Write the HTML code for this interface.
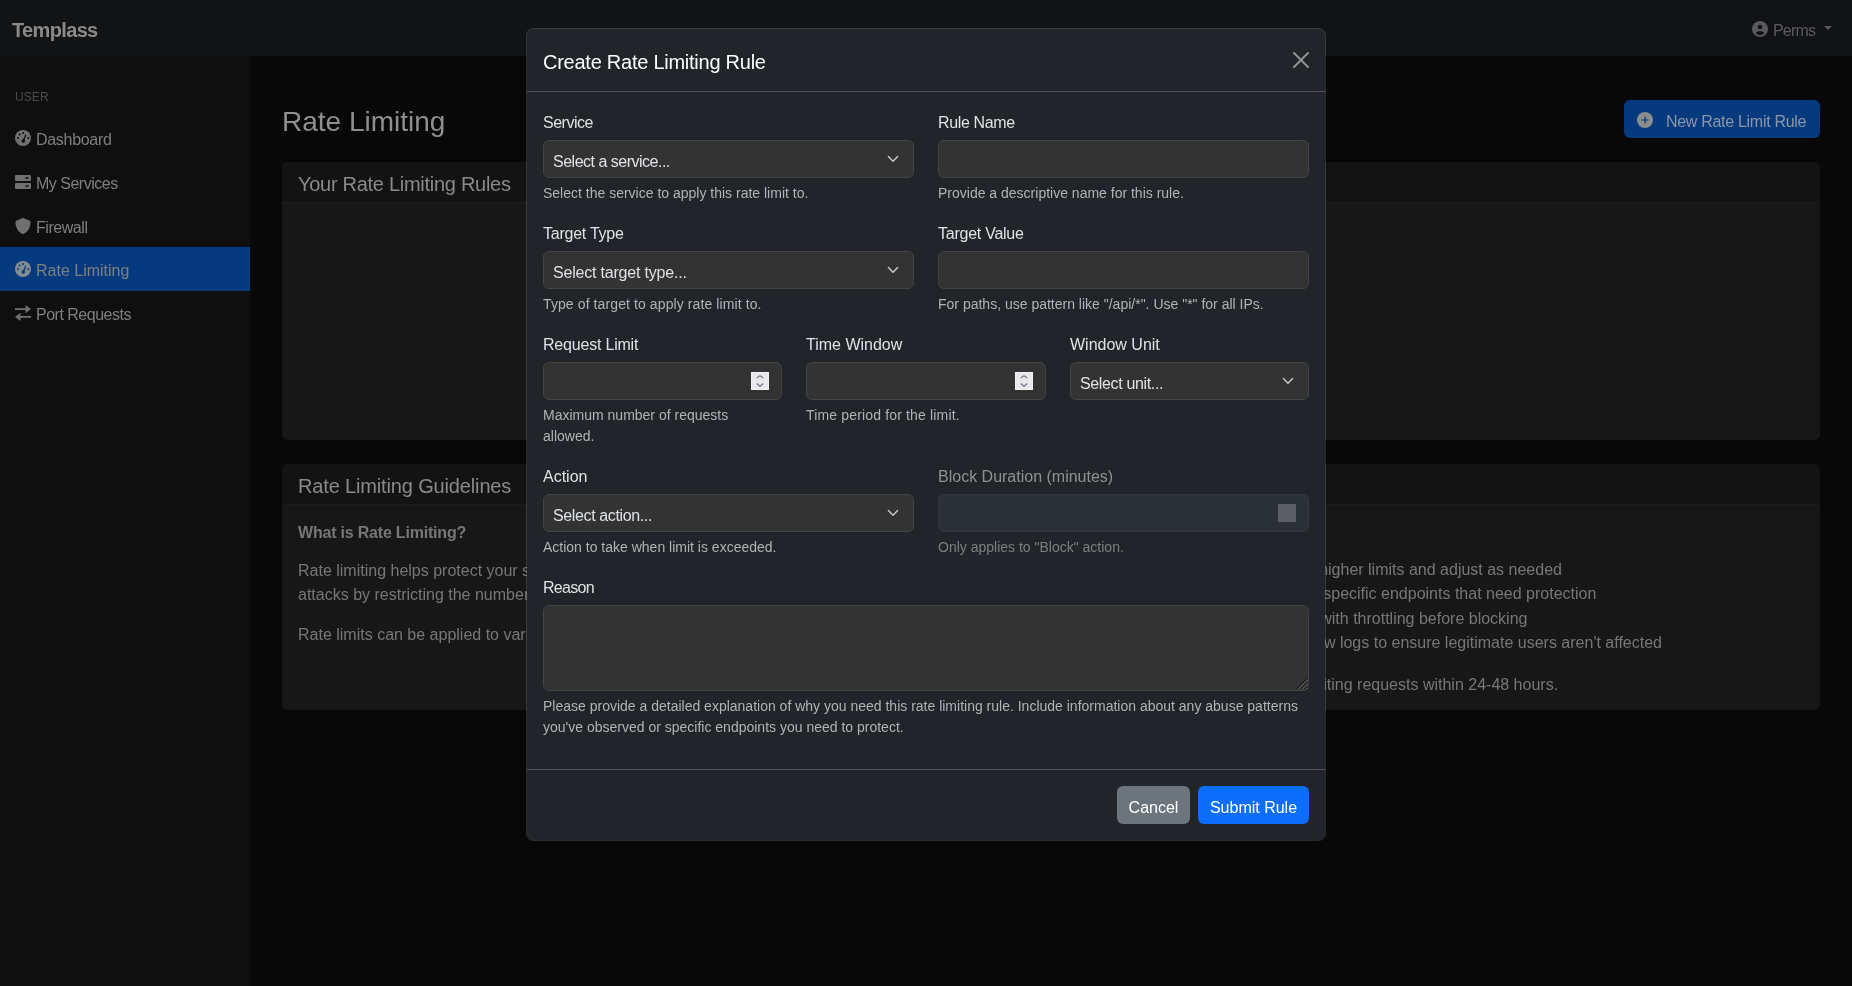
<!DOCTYPE html>
<html><head><meta charset="utf-8">
<style>
*{box-sizing:border-box;margin:0;padding:0}
html,body{width:1852px;height:986px;overflow:hidden}
body{background:#080808;font-family:"Liberation Sans",sans-serif;color:#dee2e6;position:relative}
.abs{position:absolute}
.nav{left:0;top:0;width:1852px;height:56px;background:#121315}
.brand{left:12px;top:15px;line-height:30px;font-size:20px;font-weight:bold;color:#8a8a8a;letter-spacing:-0.65px}
.perms{left:1773px;top:19px;font-size:16px;line-height:24px;color:#5a5b5d;letter-spacing:-0.8px}
.side{left:0;top:56px;width:250px;height:930px;background:#0f0f0f}
.sec{left:15px;top:88px;font-size:12px;line-height:18px;color:#4b4b4b;letter-spacing:0.1px}
.item{left:0;width:250px;height:44px;font-size:16px;color:#7e7f80}
.item span{position:absolute;left:36px;top:12px;line-height:24px}
.item svg{position:absolute;left:15px;top:14px}
.item.active{background:#063a7f}
.h1{left:282px;top:105px;font-size:28px;line-height:34px;color:#8f8f8f}
.btnnew{left:1624px;top:100px;width:196px;height:38px;background:#063a7f;border-radius:6px;color:#8e95a3;font-size:16px;line-height:24px}
.card{left:282px;width:1538px;background:#171717;border-radius:6px}
.card .hd{position:absolute;left:0;top:0;width:100%;height:41px;background:#131313;border-bottom:1px solid #1c1c1c;border-radius:6px 6px 0 0}
.card .ht{position:absolute;left:16px;top:11px;font-size:20px;color:#8a8a8a}
.gtext{font-size:16px;color:#777777;line-height:24px;white-space:nowrap}
/* modal */
.modal{left:526px;top:28px;width:800px;height:813px;background:#212529;background-clip:padding-box;border:1px solid rgba(255,255,255,.15);border-radius:8px}
.mtitle{font-size:20px;color:#fff;line-height:30px}
.mhdline{left:0;top:62px;width:798px;height:1px;background:#495057}
.mftline{left:0;top:740px;width:798px;height:1px;background:#495057}
.lbl{font-size:16px;color:#dee2e6;line-height:24px}
.ctl{height:38px;background:#333333;border:1px solid #444444;border-radius:6px}
.sel{font-size:16px;color:#dee2e6}
.sel span{position:absolute;left:9px;top:12px}
.sel svg{position:absolute;right:14px;top:14px}
.help{font-size:14px;color:#afb3b7;line-height:21px}
.hline{height:1px;background:#495057}
.spin{position:absolute;right:12px;top:9px;width:18px;height:18px;background:#e9e9ed;border:1px solid #f1f1f5}
.btn{height:38px;border-radius:6px;font-size:16px;color:#fff;text-align:center;line-height:24px;padding-top:10px}
.abs{will-change:transform}
</style></head><body>
<div class="abs nav"></div>
<div class="abs brand">Templass</div>
<svg class="abs" style="left:1752px;top:21px" width="16" height="16" viewBox="0 0 16 16"><circle cx="8" cy="8" r="8" fill="#58595b"/><circle cx="8" cy="6" r="2.3" fill="#121315"/><path d="M3.6 12.6C4.5 10.9 6 10 8 10s3.5.9 4.4 2.6C11.3 13.5 9.8 14 8 14s-3.3-.5-4.4-1.4z" fill="#121315"/></svg>
<div class="abs perms">Perms</div>
<svg class="abs" style="left:1824px;top:26px" width="8" height="4" viewBox="0 0 8 4"><path d="M0 0h8L4 4z" fill="#58595b"/></svg>
<div class="abs side"></div>
<div class="abs sec">USER</div>
<div class="abs item" style="top:116px"><svg width="16" height="16" viewBox="0 0 16 16"><circle cx="8" cy="8" r="8" fill="#707070"/><g fill="#0f0f0f"><circle cx="8.1" cy="3" r="1"/><circle cx="4.6" cy="4.6" r="1"/><circle cx="3" cy="8" r="1"/><circle cx="13.2" cy="8" r="1"/><circle cx="8.3" cy="11" r="1.8"/><path d="M7.6 10.8 10.4 4.3 11.3 4.7 9 11.3z"/></g></svg><span style="letter-spacing:-0.3px">Dashboard</span></div>
<div class="abs item" style="top:160px"><svg width="16" height="16" viewBox="0 0 16 16"><g fill="#707070"><rect x="0" y="1" width="16" height="6" rx="1"/><rect x="0" y="9" width="16" height="6" rx="1"/></g><g fill="#0f0f0f"><rect x="10.5" y="3.2" width="3" height="1.6"/><rect x="10.5" y="11.2" width="3" height="1.6"/></g></svg><span style="letter-spacing:-0.5px">My Services</span></div>
<div class="abs item" style="top:204px"><svg width="16" height="16" viewBox="0 0 512 512"><path d="M256 0c4.6 0 9.2 1 13.4 2.9L457.7 82.8c22 9.3 38.4 31 38.3 57.2c-.5 99.2-41.3 280.7-213.6 363.2c-16.7 8-36.1 8-52.8 0C57.3 420.7 16.5 239.2 16 140c-.1-26.2 16.3-47.9 38.3-57.2L242.7 2.9C246.8 1 251.4 0 256 0z" fill="#707070"/></svg><span style="letter-spacing:-0.45px">Firewall</span></div>
<div class="abs item active" style="top:247px"><svg width="16" height="16" viewBox="0 0 16 16"><circle cx="8" cy="8" r="8" fill="#858b93"/><g fill="#063a7f"><circle cx="8.1" cy="3" r="1"/><circle cx="4.6" cy="4.6" r="1"/><circle cx="3" cy="8" r="1"/><circle cx="13.2" cy="8" r="1"/><circle cx="8.3" cy="11" r="1.8"/><path d="M7.6 10.8 10.4 4.3 11.3 4.7 9 11.3z"/></g></svg><span>Rate Limiting</span></div>
<div class="abs item" style="top:291px"><svg width="16" height="16" viewBox="0 0 16 16"><g fill="#707070"><path d="M0 3.2h11v1.8H0z"/><path d="M10.5 0 16 4.1 10.5 8.2z"/><path d="M5 11h11v1.8H5z"/><path d="M5.5 7.8 0 11.9 5.5 16z"/></g></svg><span style="letter-spacing:-0.5px">Port Requests</span></div>
<div class="abs h1">Rate Limiting</div>
<div class="abs btnnew"><svg width="16" height="16" viewBox="0 0 16 16" style="position:absolute;left:13px;top:12px"><circle cx="8" cy="8" r="8" fill="#8a8c90"/><path d="M7.4 4.5h1.2v2.9h2.9v1.2H8.6v2.9H7.4V8.6H4.5V7.4h2.9z" fill="#063a7f"/></svg><span style="letter-spacing:-0.3px;position:absolute;left:42px;top:10px">New Rate Limit Rule</span></div>
<div class="abs card" style="top:162px;height:278px"><div class="hd"></div><div class="ht" style="letter-spacing:-0.28px">Your Rate Limiting Rules</div></div>
<div class="abs card" style="top:464px;height:246px"><div class="hd"></div><div class="ht" style="letter-spacing:-0.15px">Rate Limiting Guidelines</div>
<div class="abs gtext" style="letter-spacing:-0.2px;left:16px;top:57px;font-weight:bold">What is Rate Limiting?</div>
<div class="abs gtext" style="left:16px;top:95px;width:800px">Rate limiting helps protect your services from abuse and DDoS<br>attacks by restricting the number of requests</div>
<div class="abs gtext" style="left:16px;top:159px">Rate limits can be applied to various targets</div>
</div>
<div class="abs gtext" id="r1" style="right:290px;top:558px">Start with higher limits and adjust as needed</div>
<div class="abs gtext" id="r2" style="right:256px;top:582px">Apply to specific endpoints that need protection</div>
<div class="abs gtext" id="r3" style="right:325px;top:607px">Start with throttling before blocking</div>
<div class="abs gtext" id="r4" style="right:190px;top:631px">Review logs to ensure legitimate users aren't affected</div>
<div class="abs gtext" id="r5" style="right:294px;top:673px">We review rate limiting requests within 24-48 hours.</div>
<div class="abs modal"></div>
<div class="abs mtitle" style="letter-spacing:-0.25px;left:543px;top:47px">Create Rate Limiting Rule</div>
<svg class="abs" style="left:1293px;top:52px" width="16" height="16" viewBox="0 0 16 16"><path d="M.293.293a1 1 0 0 1 1.414 0L8 6.586 14.293.293a1 1 0 1 1 1.414 1.414L9.414 8l6.293 6.293a1 1 0 0 1-1.414 1.414L8 9.414l-6.293 6.293a1 1 0 0 1-1.414-1.414L6.586 8 .293 1.707a1 1 0 0 1 0-1.414" fill="#fff" fill-opacity=".5"/></svg>
<div class="abs hline" style="left:527px;top:91px;width:798px"></div>

<div class="abs lbl" style="letter-spacing:-0.5px;left:543px;top:111px">Service</div>
<div class="abs ctl sel" style="left:543px;top:140px;width:371px"><span style="letter-spacing:-0.5px">Select a service...</span><svg width="12" height="8" viewBox="0 0 12 8"><path d="M1.4 1.5 6 6.3 10.6 1.5" fill="none" stroke="#c8cdd2" stroke-width="1.4" stroke-linecap="round" stroke-linejoin="round"/></svg></div>
<div class="abs help" style="left:543px;top:183px">Select the service to apply this rate limit to.</div>

<div class="abs lbl" style="letter-spacing:-0.35px;left:938px;top:111px">Rule Name</div>
<div class="abs ctl" style="left:938px;top:140px;width:371px"></div>
<div class="abs help" style="left:938px;top:183px">Provide a descriptive name for this rule.</div>

<div class="abs lbl" style="letter-spacing:-0.25px;left:543px;top:222px">Target Type</div>
<div class="abs ctl sel" style="left:543px;top:251px;width:371px"><span style="letter-spacing:-0.2px">Select target type...</span><svg width="12" height="8" viewBox="0 0 12 8"><path d="M1.4 1.5 6 6.3 10.6 1.5" fill="none" stroke="#c8cdd2" stroke-width="1.4" stroke-linecap="round" stroke-linejoin="round"/></svg></div>
<div class="abs help" style="letter-spacing:0.1px;left:543px;top:294px">Type of target to apply rate limit to.</div>

<div class="abs lbl" style="letter-spacing:-0.25px;left:938px;top:222px">Target Value</div>
<div class="abs ctl" style="left:938px;top:251px;width:371px"></div>
<div class="abs help" style="left:938px;top:294px">For paths, use pattern like "/api/*". Use "*" for all IPs.</div>

<div class="abs lbl" style="letter-spacing:-0.2px;left:543px;top:333px">Request Limit</div>
<div class="abs ctl" style="left:543px;top:362px;width:239px"><div class="spin"><svg width="16" height="16" viewBox="0 0 16 16" style="position:absolute;left:0;top:0"><path d="M4.7 5 8 2.7 11.3 5M4.7 10.5 8 13.3 11.3 10.5" fill="none" stroke="#7c7b8a" stroke-width="1.3"/></svg></div></div>
<div class="abs help" style="left:543px;top:405px;width:239px;line-height:21px">Maximum number of requests<br>allowed.</div>

<div class="abs lbl" style="left:806px;top:333px">Time Window</div>
<div class="abs ctl" style="left:806px;top:362px;width:240px"><div class="spin"><svg width="16" height="16" viewBox="0 0 16 16" style="position:absolute;left:0;top:0"><path d="M4.7 5 8 2.7 11.3 5M4.7 10.5 8 13.3 11.3 10.5" fill="none" stroke="#7c7b8a" stroke-width="1.3"/></svg></div></div>
<div class="abs help" style="letter-spacing:0.16px;left:806px;top:405px">Time period for the limit.</div>

<div class="abs lbl" style="left:1070px;top:333px">Window Unit</div>
<div class="abs ctl sel" style="left:1070px;top:362px;width:239px"><span style="letter-spacing:-0.35px">Select unit...</span><svg width="12" height="8" viewBox="0 0 12 8"><path d="M1.4 1.5 6 6.3 10.6 1.5" fill="none" stroke="#c8cdd2" stroke-width="1.4" stroke-linecap="round" stroke-linejoin="round"/></svg></div>

<div class="abs lbl" style="left:543px;top:465px">Action</div>
<div class="abs ctl sel" style="left:543px;top:494px;width:371px"><span style="letter-spacing:-0.37px">Select action...</span><svg width="12" height="8" viewBox="0 0 12 8"><path d="M1.4 1.5 6 6.3 10.6 1.5" fill="none" stroke="#c8cdd2" stroke-width="1.4" stroke-linecap="round" stroke-linejoin="round"/></svg></div>
<div class="abs help" style="left:543px;top:537px">Action to take when limit is exceeded.</div>

<div class="abs lbl" style="left:938px;top:465px;color:#8e9193">Block Duration (minutes)</div>
<div class="abs ctl" style="left:938px;top:494px;width:371px;background:#2b3035;border-color:#34383d"><div class="abs" style="left:339px;top:9px;width:18px;height:18px;background:#5b5e63"></div></div>
<div class="abs help" style="left:938px;top:537px;color:#7b7f83">Only applies to "Block" action.</div>

<div class="abs lbl" style="letter-spacing:-0.7px;left:543px;top:576px">Reason</div>
<div class="abs ctl" style="left:543px;top:605px;width:766px;height:86px"></div>
<svg class="abs" style="left:1294px;top:676px" width="14" height="14" viewBox="0 0 14 14"><g stroke-width="1"><path d="M2.5 13 13 2.5" stroke="#161616"/><path d="M4 13.5 13.5 4" stroke="#6a6a6a"/><path d="M6.5 13 13 6.5" stroke="#161616"/><path d="M8 13.5 13.5 8" stroke="#6a6a6a"/><path d="M10.5 13 13 10.5" stroke="#161616"/><path d="M12 13.5 13.5 12" stroke="#6a6a6a"/></g></svg>
<div class="abs help" style="left:543px;top:696px;line-height:21px">Please provide a detailed explanation of why you need this rate limiting rule. Include information about any abuse patterns<br>you've observed or specific endpoints you need to protect.</div>

<div class="abs hline" style="left:527px;top:769px;width:798px"></div>
<div class="abs btn" style="left:1117px;top:786px;width:73px;background:#6c757d">Cancel</div>
<div class="abs btn" style="left:1198px;top:786px;width:111px;background:#0d6efd">Submit Rule</div>
</body></html>
